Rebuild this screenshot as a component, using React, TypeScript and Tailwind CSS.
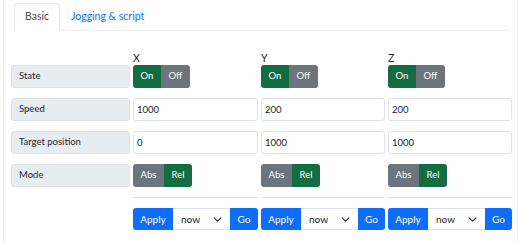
import React from 'react'

const font = { fontFamily: 'Lato, "Noto Sans", sans-serif' }

const axes = [
  { name: 'X', speed: '1000', target: '0' },
  { name: 'Y', speed: '200', target: '1000' },
  { name: 'Z', speed: '200', target: '1000' },
]

const Label = ({ children }: { children: React.ReactNode }) => (
  <div className="h-[23px] flex items-center pl-[7px] bg-[#e9ecef] border border-[#dee2e6] rounded-[3px] text-[#212529]">
    {children}
  </div>
)

const Input = ({ value }: { value: string }) => (
  <input
    readOnly
    value={value}
    className="h-[23px] w-full px-[3px] border border-[#dee2e6] rounded-[3px] text-[#212529] bg-white outline-none"
  />
)

const OnOff = () => (
  <div className="flex h-[23px] text-white">
    <div className="w-[28px] bg-[#146c43] rounded-l-[3px] flex items-center justify-center">On</div>
    <div className="w-[29px] bg-[#6c757d] rounded-r-[3px] flex items-center justify-center">Off</div>
  </div>
)

const AbsRel = () => (
  <div className="flex h-[23px] text-white">
    <div className="w-[31px] bg-[#6c757d] rounded-l-[3px] flex items-center justify-center">Abs</div>
    <div className="w-[28px] bg-[#146c43] rounded-r-[3px] flex items-center justify-center">Rel</div>
  </div>
)

const Chevron = () => (
  <svg width="9" height="9" viewBox="0 0 16 16" fill="none" stroke="#343a40" strokeWidth="2" strokeLinecap="round" strokeLinejoin="round">
    <path d="m2 5 6 6 6-6" />
  </svg>
)

const ApplyGroup = () => (
  <div className="flex h-[22px] text-[10px]">
    <div className="w-[40px] bg-[#0d6efd] text-white rounded-l-[3px] flex items-center justify-center">Apply</div>
    <div className="w-[57px] bg-white border-y border-[#dee2e6] flex items-center justify-between pl-[8px] pr-[8px] text-[#212529]">
      <span>now</span>
      <Chevron />
    </div>
    <div className="flex-1 bg-[#0d6efd] text-white rounded-r-[3px] flex items-center justify-center">Go</div>
  </div>
)

export default function App() {
  return (
    <div className="w-[519px] h-[242px] bg-white overflow-hidden text-[9.5px]" style={font}>
      <div className="ml-[3px] w-[515px] h-full border-x border-[#f0f0f0]">
        <div className="pl-[10px] pr-[9px] pt-[3px]">
          <div className="flex h-[28px] border-b border-[#eeeeee]">
            <div className="px-[10px] h-[28px] flex items-center border border-[#e6e6e6] border-b-white rounded-t-[4px] bg-white text-[#495057] text-[10.5px]">
              Basic
            </div>
            <div className="pl-[11px] flex items-center text-[#0d6efd] text-[10.5px]">Jogging &amp; script</div>
          </div>
        </div>
        <div className="pl-[7px] pt-[20px]">
          <div className="grid grid-cols-[119px_125px_124px_124px] gap-x-[3px] gap-y-[10px]">
            <div className="h-[14px] -mb-[10px]" />
            {axes.map(a => (
              <div key={a.name} className="h-[14px] -mb-[10px] leading-[14px] text-[10.5px] text-[#212529]">{a.name}</div>
            ))}
            <Label>State</Label>
            {axes.map(a => <OnOff key={a.name} />)}
            <Label>Speed</Label>
            {axes.map(a => <Input key={a.name} value={a.speed} />)}
            <Label>Target position</Label>
            {axes.map(a => <Input key={a.name} value={a.target} />)}
            <Label>Mode</Label>
            {axes.map(a => <AbsRel key={a.name} />)}
            <div />
            {axes.map(a => (
              <div key={a.name}>
                <div className="h-px bg-[#dee2e6]" />
                <div className="mt-[10px]">
                  <ApplyGroup />
                </div>
              </div>
            ))}
          </div>
        </div>
      </div>
    </div>
  )
}
